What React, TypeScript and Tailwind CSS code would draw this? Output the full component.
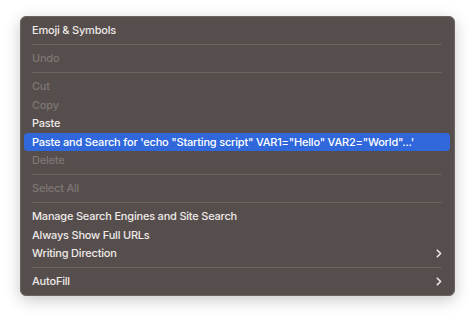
type Item =
  | { kind: "sep" }
  | { kind: "item"; label: string; disabled?: boolean; active?: boolean; sub?: boolean };

const items: Item[] = [
  { kind: "item", label: "Emoji & Symbols" },
  { kind: "sep" },
  { kind: "item", label: "Undo", disabled: true },
  { kind: "sep" },
  { kind: "item", label: "Cut", disabled: true },
  { kind: "item", label: "Copy", disabled: true },
  { kind: "item", label: "Paste" },
  {
    kind: "item",
    label: `Paste and Search for 'echo "Starting script" VAR1="Hello" VAR2="World"...'`,
    active: true,
  },
  { kind: "item", label: "Delete", disabled: true },
  { kind: "sep" },
  { kind: "item", label: "Select All", disabled: true },
  { kind: "sep" },
  { kind: "item", label: "Manage Search Engines and Site Search" },
  { kind: "item", label: "Always Show Full URLs" },
  { kind: "item", label: "Writing Direction", sub: true },
  { kind: "sep" },
  { kind: "item", label: "AutoFill", sub: true },
];

function Chevron() {
  return (
    <svg width="6" height="9" viewBox="0 0 6 9" className="text-[#ece8e6]">
      <path d="M1.3 1.2 L4.6 4.5 L1.3 7.8" fill="none" stroke="currentColor" strokeWidth="1.6" strokeLinecap="round" strokeLinejoin="round" />
    </svg>
  );
}

export default function App() {
  return (
    <div className="h-[317px] w-[474px] bg-white pl-[20px] pt-[16px] font-['Inter',sans-serif]">
      <div className="w-[435px] rounded-[6px] border border-[#6b6461] bg-[#564e4c] py-[4px] pl-[3px] pr-[4px] shadow-[0_4px_16px_rgba(0,0,0,0.22)]">
        {items.map((it, i) =>
          it.kind === "sep" ? (
            <div key={i} className="flex h-[9.5px] items-center px-[8px]">
              <div className="h-px w-full bg-[#6b6360]" />
            </div>
          ) : (
            <div
              key={i}
              className={
                "flex h-[18.5px] items-center justify-between rounded-[4px] pl-[8px] pr-[8px] text-[11px] font-medium tracking-[-0.2px] " +
                (it.active
                  ? "bg-[#3068dc] text-white"
                  : it.disabled
                  ? "text-[#7e7674]"
                  : "text-[#eeeae8]")
              }
            >
              <span className="whitespace-nowrap">{it.label}</span>
              {it.sub && <Chevron />}
            </div>
          )
        )}
      </div>
    </div>
  );
}
